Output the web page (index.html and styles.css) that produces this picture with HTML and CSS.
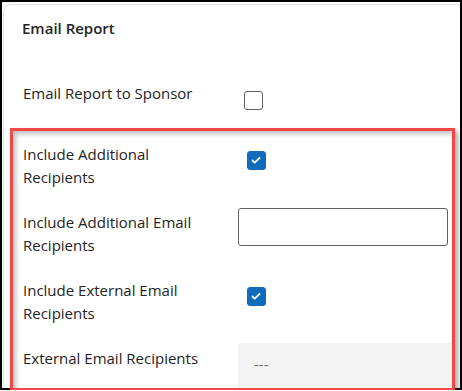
FILE: index.html
```html
<!DOCTYPE html>
<html lang="en">
<head>
    <meta charset="UTF-8">
    <meta name="viewport" content="width=device-width, initial-scale=1.0">
    <title>Email Report</title>
    <link rel="stylesheet" href="styles.css">
</head>
<body>

    <div class="frame">
        <div class="card">
            <h3 class="card-title">Email Report</h3>

            <div class="form-row sponsor-row">
                <label class="form-label" for="sponsor">Email Report to Sponsor</label>
                <div class="form-control">
                    <input type="checkbox" id="sponsor" class="check">
                </div>
            </div>

            <!-- Highlighted section -->
            <div class="highlight">
                <div class="form-row">
                    <label class="form-label" for="add-recipients">Include Additional Recipients</label>
                    <div class="form-control">
                        <input type="checkbox" id="add-recipients" class="check" checked>
                    </div>
                </div>

                <div class="form-row">
                    <label class="form-label" for="add-emails">Include Additional Email Recipients</label>
                    <div class="form-control">
                        <input type="text" id="add-emails" class="text-input">
                    </div>
                </div>

                <div class="form-row">
                    <label class="form-label" for="ext-recipients">Include External Email Recipients</label>
                    <div class="form-control">
                        <input type="checkbox" id="ext-recipients" class="check" checked>
                    </div>
                </div>

                <div class="form-row">
                    <span class="form-label">External Email Recipients</span>
                    <div class="form-control">
                        <div class="readonly-field">---</div>
                    </div>
                </div>
            </div>
        </div>
    </div>

</body>
</html>
```

FILE: styles.css
```css
/* Reset styles */
* {
    margin: 0;
    padding: 0;
    box-sizing: border-box;
}

body {
    font-family: 'Segoe UI', 'Open Sans', sans-serif;
    font-size: 15px;
    line-height: 23px;
    color: #242424;
    background-color: #fff;
}

/* Screenshot frame */
.frame {
    width: 462px;
    height: 390px;
    border: 2px solid #000;
    padding: 2px 0 0 1px;
}

.card {
    height: 100%;
    background-color: #fff;
    border: 1px solid #e2e2e2;
    border-right: none;
    border-bottom: none;
    border-radius: 8px 0 0 0;
    padding: 12px 0 0 0;
}

.card-title {
    font-size: 15px;
    font-weight: 600;
    line-height: 23px;
    padding-left: 18px;
}

/* Form rows */
.form-row {
    display: grid;
    grid-template-columns: 195px 1fr;
    column-gap: 30px;
    align-items: start;
    padding: 11px 0;
}

.form-label {
    padding-left: 10px;
}

.sponsor-row {
    margin-top: 31px;
    padding: 11px 0 0 6px;
    height: 57px;
}

.sponsor-row .form-label {
    padding-left: 13px;
}

/* Annotation box */
.highlight {
    margin: 0 5px 0 6px;
    height: 263px;
    border: 3px solid #f44848;
    padding-top: 1px;
    overflow: hidden;
    box-shadow: 3px 3px 5px rgba(0, 0, 0, 0.35), inset 3px 3px 5px rgba(0, 0, 0, 0.25);
}

/* Controls */
.check {
    appearance: none;
    -webkit-appearance: none;
    display: block;
    width: 19px;
    height: 19px;
    margin: 8px 0 0 9px;
    border: 1px solid #616161;
    border-radius: 3px;
    background-color: #fff;
}

.sponsor-row .check {
    margin-top: 9px;
}

.check:checked {
    border-color: #0f6cbd;
    background-color: #0f6cbd;
    background-image: url("data:image/svg+xml,%3Csvg xmlns='http://www.w3.org/2000/svg' viewBox='0 0 19 19'%3E%3Cpath d='M5 9.5 7.5 12 13 6.5' fill='none' stroke='%23fff' stroke-width='2' stroke-linecap='round' stroke-linejoin='round'/%3E%3C/svg%3E");
}

.text-input {
    display: block;
    width: calc(100% - 4px);
    height: 38px;
    margin-top: -3px;
    border: 1px solid #616161;
    border-radius: 3px;
    font: inherit;
    padding: 0 10px;
}

.readonly-field {
    margin-top: -4px;
    height: 60px;
    background-color: #f3f3f3;
    border-radius: 4px 0 0 0;
    padding: 10px 16px;
    color: #707070;
}
```
